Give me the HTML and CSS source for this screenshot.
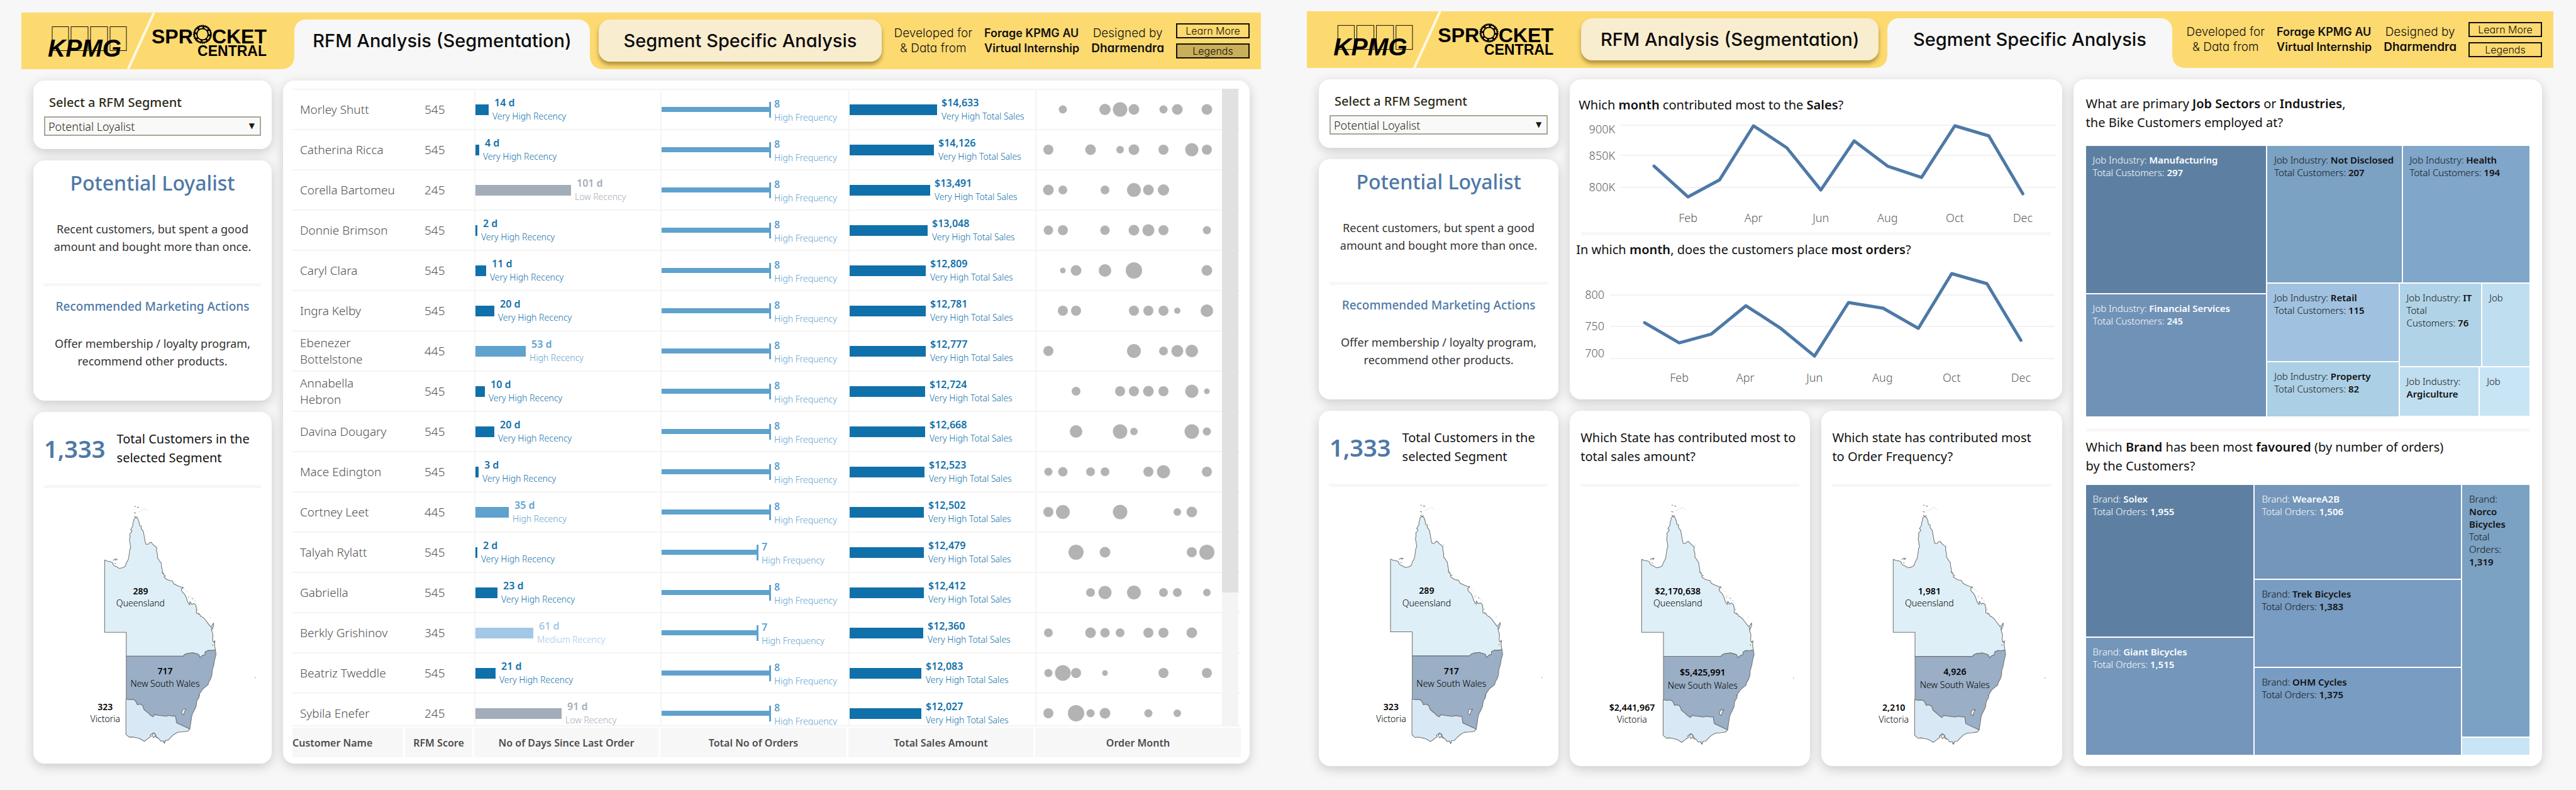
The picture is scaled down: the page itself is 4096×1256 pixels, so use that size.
FILE: index.html
```html
<!DOCTYPE html>
<html lang="en">
<head>
<meta charset="utf-8">
<title>RFM Analysis – Sprocket Central</title>
<link rel="stylesheet" href="styles.css">
</head>
<body>

<svg class="defs" width="0" height="0" aria-hidden="true">
  <defs>
    <symbol id="brand" viewBox="0 0 434 89">
      <g fill="none" stroke="#14100a" stroke-width="1">
        <rect x="49" y="22" width="26" height="38"/>
        <rect x="79" y="22" width="27" height="38"/>
        <rect x="110" y="22" width="27" height="38"/>
        <rect x="141" y="22" width="26" height="38"/>
      </g>
      <text class="logo-kpmg" x="42" y="69">KPMG</text>
      <path d="M211 -1 169 91" stroke="#fff8e2" stroke-width="4"/>
      <text class="logo-sprocket" x="207" y="48">SPR</text>
      <text class="logo-sprocket" x="390" y="48" text-anchor="end">CKET</text>
      <text class="logo-central" x="390" y="68" text-anchor="end">CENTRAL</text>
      <g transform="translate(288 34)">
        <circle r="14" fill="none" stroke="#000" stroke-width="2" stroke-dasharray="2 1"/>
        <circle r="13" fill="none" stroke="#000" stroke-width="2"/>
        <circle r="9" fill="none" stroke="#000" stroke-width="2"/>
        <circle r="11" fill="none" stroke="#000" stroke-width="4" stroke-dasharray="3 5.6"/>
      </g>
    </symbol>
    <symbol id="states" viewBox="0 0 344 392">
      <g transform="translate(71 0) scale(.2617)" stroke="#737373" stroke-width="4" stroke-linejoin="round">
        <path fill="#dfeff7" d="M96 363 112 370 130 373 143 378 148 392 156 399 165 402 185 414 205 410 220 402 228 380 240 358 246 320 248 300 254 290 250 262 246 240 250 222 248 205 256 198 262 186 253 180 262 165 268 155 266 146 270 135 275 112 284 106 296 112 303 128 308 155 318 157 317 172 330 190 335 215 340 245 346 268 360 268 368 258 378 256 384 264 392 272 403 282 412 288 410 305 416 330 416 352 425 362 432 375 438 380 441 405 446 430 444 440 456 450 458 470 475 482 490 488 505 490 515 508 540 520 560 528 572 530 560 540 565 555 580 570 590 590 598 615 605 628 612 635 612 615 625 632 636 626 648 636 652 660 652 685 672 692 676 702 690 710 702 720 715 738 738 768 748 758 756 745 756 762 744 790 752 815 750 850 756 862 764 852 762 880 767 908 745 912 722 911 705 920 703 938 690 940 675 955 665 935 655 932 630 925 595 930 580 936 572 946 227 946 227 801 96 801Z"/>
        <path fill="#9aaec5" d="M227 946H572L580 936 595 930 630 925 655 932 665 935 675 955 690 940 703 938 705 920 722 911 745 912 767 908 771 935 762 970 757 1000 748 1030 746 1060 738 1084 728 1100 722 1120 706 1132 690 1145 680 1160 670 1175 668 1195 655 1215 652 1235 650 1250 640 1272 628 1295 622 1318 620 1335 612 1387 532 1350 525 1308 510 1310 490 1305 466 1310 440 1306 420 1304 400 1300 388 1313 372 1302 360 1290 335 1270 326 1245 308 1236 294 1240 288 1226 278 1212 262 1208 245 1210 227 1205Z"/>
        <path fill="#d8e9f5" d="M225 1205 245 1210 262 1208 278 1212 288 1226 294 1240 308 1236 326 1245 335 1270 360 1290 372 1302 388 1313 400 1300 420 1304 440 1306 466 1310 490 1305 510 1310 525 1308 532 1350 612 1387 600 1400 570 1404 540 1406 515 1420 500 1434 480 1455 464 1456 458 1474 450 1458 435 1460 425 1446 410 1435 404 1418 390 1410 372 1425 378 1432 365 1440 350 1452 336 1462 318 1450 300 1442 280 1438 262 1435 245 1437 225 1420Z"/>
        <path fill="#fff" d="M570 1268 590 1266 580 1280 574 1302 562 1290ZM384 1424 394 1410 404 1426 392 1440Z"/>
        <path fill="none" d="M276 38 284 40M292 44 304 44M274 76 286 80M276 98 284 104 296 102M148 366 156 358 172 358 160 366M156 384 164 386M446 438 454 446M460 458 468 462M566 536 574 528M604 588 606 592M626 594 628 600M658 664 660 668M664 684 668 694M746 768 742 786M746 876 752 880M664 1178 672 1184M400 1430 416 1444M1006 1074 1009 1078M452 1468 464 1464"/>
        <path fill="none" stroke-dasharray="3 9" stroke-width="3" d="M304 72 330 58 345 52 358 68M576 540 600 556M604 578 640 606 648 622M654 648 662 660M732 712 736 712M416 276 420 278"/>
      </g>
    </symbol>
  </defs>
</svg>

<div class="page">

<section class="dashboard dashboard-rfm">
  <header class="banner">
    <svg class="brand" viewBox="0 0 434 89" role="img" aria-label="KPMG and Sprocket Central"><use href="#brand"/></svg>
    <a class="tab tab-current" href="#rfm">RFM Analysis (Segmentation)</a>
    <a class="tab tab-second" href="#segment">Segment Specific Analysis</a>
    <div class="credits">
      <p class="credit">Developed for<br>&amp; Data from</p>
      <p class="credit credit-strong">Forage KPMG AU<br>Virtual Internship</p>
      <p class="credit">Designed by<br><b>Dharmendra</b></p>
      <div class="credit-buttons">
        <button type="button">Learn More</button>
        <button type="button" class="pressed">Legends</button>
      </div>
    </div>
  </header>

  <main class="board board-rfm">
    <div class="sidebar">
      <div class="card filter">
        <label for="segment-a">Select a RFM Segment</label>
        <div class="select-box"><select id="segment-a"><option>Potential Loyalist</option></select></div>
      </div>
      <div class="card profile">
        <h2>Potential Loyalist</h2>
        <p>Recent customers, but spent a good<br>amount and bought more than once.</p>
        <hr>
        <h3>Recommended Marketing Actions</h3>
        <p>Offer membership / loyalty program,<br>recommend other products.</p>
      </div>
      <div class="card region">
        <div class="region-head"><strong>1,333</strong><p>Total Customers in the<br>selected Segment</p></div>
        <hr>
        <svg class="map" viewBox="0 0 344 392">
          <use href="#states"/>
          <text class="map-value" x="153" y="150">289</text><text x="153" y="169">Queensland</text>
          <text class="map-value" x="192" y="276">717</text><text x="192" y="296">New South Wales</text>
          <text class="map-value" x="97" y="333">323</text><text x="97" y="352">Victoria</text>
        </svg>
      </div>
    </div>

    <div class="card customers">
      <table>
        <thead>
          <tr>
            <th scope="col">Customer Name</th><th scope="col">RFM Score</th><th scope="col">No of Days Since Last Order</th>
            <th scope="col">Total No of Orders</th><th scope="col">Total Sales Amount</th><th scope="col">Order Month</th>
          </tr>
        </thead>
        <tbody id="customer-rows"></tbody>
      </table>
      <div class="scrollbar"><div class="thumb"></div></div>
    </div>
  </main>
</section>

<section class="dashboard dashboard-segment">
  <header class="banner">
    <svg class="brand" viewBox="0 0 434 89" role="img" aria-label="KPMG and Sprocket Central"><use href="#brand"/></svg>
    <a class="tab" href="#rfm">RFM Analysis (Segmentation)</a>
    <a class="tab tab-second tab-current" href="#segment">Segment Specific Analysis</a>
    <div class="credits">
      <p class="credit">Developed for<br>&amp; Data from</p>
      <p class="credit credit-strong">Forage KPMG AU<br>Virtual Internship</p>
      <p class="credit">Designed by<br><b>Dharmendra</b></p>
      <div class="credit-buttons">
        <button type="button">Learn More</button>
        <button type="button">Legends</button>
      </div>
    </div>
  </header>

  <main class="board board-segment">
    <div class="sidebar">
      <div class="card filter">
        <label for="segment-b">Select a RFM Segment</label>
        <div class="select-box"><select id="segment-b"><option>Potential Loyalist</option></select></div>
      </div>
      <div class="card profile">
        <h2>Potential Loyalist</h2>
        <p>Recent customers, but spent a good<br>amount and bought more than once.</p>
        <hr>
        <h3>Recommended Marketing Actions</h3>
        <p>Offer membership / loyalty program,<br>recommend other products.</p>
      </div>
      <div class="card region">
        <div class="region-head"><strong>1,333</strong><p>Total Customers in the<br>selected Segment</p></div>
        <hr>
        <svg class="map" viewBox="0 0 344 392">
          <use href="#states"/>
          <text class="map-value" x="153" y="150">289</text><text x="153" y="169">Queensland</text>
          <text class="map-value" x="192" y="276">717</text><text x="192" y="296">New South Wales</text>
          <text class="map-value" x="97" y="333">323</text><text x="97" y="352">Victoria</text>
        </svg>
      </div>
    </div>

    <div class="middle">
      <div class="card trends">
        <h4>Which <b>month</b> contributed most to the <b>Sales</b>?</h4>
        <svg class="chart" viewBox="0 0 782 185">
          <path class="grid" d="M81 15H772M81 63H772M81 114H772"/>
          <polyline points="134,80 188,129 238,102 292,16 345,51 399,118 452,40 505,80 559,98 612,16 666,32 720,124"/>
          <g class="axis-y"><text x="72" y="28">900K</text><text x="72" y="70">850K</text><text x="72" y="120">800K</text></g>
          <g class="axis-x"><text x="188" y="169">Feb</text><text x="292" y="169">Apr</text><text x="399" y="169">Jun</text><text x="505" y="169">Aug</text><text x="612" y="169">Oct</text><text x="720" y="169">Dec</text></g>
        </svg>
        <hr>
        <h4>In which <b>month</b>, does the customers place <b>most orders</b>?</h4>
        <svg class="chart" viewBox="0 0 782 220">
          <path class="grid" d="M65 55H770M65 105H770M65 156H770"/>
          <polyline points="119,99 174,131 225,117 280,72 334,107 389,152 443,67 498,76 554,108 607,21 663,37 717,127"/>
          <g class="axis-y"><text x="55" y="61">800</text><text x="55" y="111">750</text><text x="55" y="154">700</text></g>
          <g class="axis-x"><text x="174" y="193">Feb</text><text x="279" y="193">Apr</text><text x="389" y="193">Jun</text><text x="497" y="193">Aug</text><text x="607" y="193">Oct</text><text x="717" y="193">Dec</text></g>
        </svg>
      </div>
      <div class="card region">
        <div class="region-head"><p>Which State has contributed most to<br>total sales amount?</p></div>
        <hr>
        <svg class="map" viewBox="0 0 344 392">
          <use href="#states"/>
          <text class="map-value" x="153" y="150">$2,170,638</text><text x="153" y="169">Queensland</text>
          <text class="map-value" x="192" y="278">$5,425,991</text><text x="192" y="298">New South Wales</text>
          <text class="map-value" x="81" y="333">$2,441,967</text><text x="81" y="352">Victoria</text>
        </svg>
      </div>
      <div class="card region">
        <div class="region-head"><p>Which state has contributed most<br>to Order Frequency?</p></div>
        <hr>
        <svg class="map" viewBox="0 0 344 392">
          <use href="#states"/>
          <text class="map-value" x="153" y="150">1,981</text><text x="153" y="169">Queensland</text>
          <text class="map-value" x="193" y="277">4,926</text><text x="193" y="297">New South Wales</text>
          <text class="map-value" x="97" y="333">2,210</text><text x="97" y="352">Victoria</text>
        </svg>
      </div>
    </div>

    <div class="card shares">
      <h4>What are primary <b>Job Sectors</b> or <b>Industries</b>,<br>the Bike Customers employed at?</h4>
      <div class="treemap industries">
        <div class="stack stack-large">
          <div class="tile light c1">Job Industry: <b>Manufacturing</b><br>Total Customers: <b>297</b></div>
          <div class="tile light c2">Job Industry: <b>Financial Services</b><br>Total Customers: <b>245</b></div>
        </div>
        <div class="stack stack-rest">
          <div class="pair pair-top">
            <div class="tile c4">Job Industry: <b>Not Disclosed</b><br>Total Customers: <b>207</b></div>
            <div class="tile c5">Job Industry: <b>Health</b><br>Total Customers: <b>194</b></div>
          </div>
          <div class="pair pair-bottom">
            <div class="stack stack-retail">
              <div class="tile c6">Job Industry: <b>Retail</b><br>Total Customers: <b>115</b></div>
              <div class="tile c7">Job Industry: <b>Property</b><br>Total Customers: <b>82</b></div>
            </div>
            <div class="stack stack-small">
              <div class="pair pair-it">
                <div class="tile c8">Job Industry: <b>IT</b><br>Total<br>Customers: <b>76</b></div>
                <div class="tile c9">Job</div>
              </div>
              <div class="pair pair-agri">
                <div class="tile c9">Job Industry:<br><b>Argiculture</b></div>
                <div class="tile c10">Job</div>
              </div>
            </div>
          </div>
        </div>
      </div>
      <hr>
      <h4>Which <b>Brand</b> has been most <b>favoured</b> (by number of orders)<br>by the Customers?</h4>
      <div class="treemap brands">
        <div class="stack stack-solex">
          <div class="tile light c1">Brand: <b>Solex</b><br>Total Orders: <b>1,955</b></div>
          <div class="tile light c3">Brand: <b>Giant Bicycles</b><br>Total Orders: <b>1,515</b></div>
        </div>
        <div class="stack stack-three">
          <div class="tile light c3">Brand: <b>WeareA2B</b><br>Total Orders: <b>1,506</b></div>
          <div class="tile c11">Brand: <b>Trek Bicycles</b><br>Total Orders: <b>1,383</b></div>
          <div class="tile c11">Brand: <b>OHM Cycles</b><br>Total Orders: <b>1,375</b></div>
        </div>
        <div class="stack stack-norco">
          <div class="tile c4">Brand:<br><b>Norco<br>Bicycles</b><br>Total<br>Orders:<br><b>1,319</b></div>
          <div class="tile c10"></div>
        </div>
      </div>
    </div>
  </main>
</section>

</div>
<script src="script.js"></script>
</body>
</html>
```
FILE: styles.css
```css
* { box-sizing: border-box; }

body {
  margin: 0;
  background: #f7f7f7;
  color: #111;
  font-family: "Noto Sans", "Open Sans", sans-serif;
  font-size: 18px;
}

h2, h3, h4, p { margin: 0; font-weight: 400; }
b, strong { font-weight: 600; }

hr {
  width: 100%;
  height: 5px;
  margin: 0;
  border: 0;
  background: #f7f7f7;
}

.defs { position: absolute; }

.page {
  display: grid;
  grid-template-columns: 1971fr 1982fr;
  gap: 73px;
  min-height: 100vh;
  padding: 0 36px 0 34px;
}

.dashboard { display: flex; flex-direction: column; }
.dashboard-rfm { padding: 20px 0 42px; }
.dashboard-segment { padding: 18px 0 38px; }

/* Banner */
.banner {
  display: grid;
  grid-template-columns: 434fr 470fr 14fr 450fr 603fr;
  height: 90px;
  background: #fdda70;
  font-family: Inter, "Open Sans", sans-serif;
  font-feature-settings: "cv11";
}

.brand { width: 100%; height: 90px; }
.logo-kpmg { font: italic bold 39px "Liberation Sans", sans-serif; }
.logo-sprocket { font: bold 32px "Liberation Sans", sans-serif; }
.logo-central { font: bold 23px "Liberation Sans", sans-serif; }

.tab {
  display: flex;
  align-items: center;
  justify-content: center;
  height: 67px;
  margin-top: 11px;
  border-radius: 18px;
  background: #f9edd0;
  box-shadow: 0 5px 6px rgba(110, 85, 10, .55);
  color: #0c0c0c;
  font-size: 29px;
  font-weight: 500;
  text-decoration: none;
  white-space: nowrap;
}
.tab-second { grid-column: 4; }
.tab-current {
  position: relative;
  height: 79px;
  padding-bottom: 12px;
  border-radius: 18px 18px 0 0;
  background: #f7f7f7;
  box-shadow: none;
}
.tab-current::before, .tab-current::after {
  content: "";
  position: absolute;
  bottom: 0;
  width: 18px;
  height: 18px;
}
.tab-current::before { right: 100%; background: radial-gradient(circle at 0 0, transparent 17px, #f7f7f7 18px); }
.tab-current::after { left: 100%; background: radial-gradient(circle at 100% 0, transparent 17px, #f7f7f7 18px); }

.credits {
  display: flex;
  align-items: center;
  justify-content: flex-end;
  gap: 19px;
  padding-right: 18px;
}
.credit {
  font-size: 19px;
  font-weight: 300;
  line-height: 24px;
  text-align: center;
  white-space: nowrap;
}
.credit-strong { font-size: 18px; font-weight: 600; text-align: left; }
.credit-buttons { display: grid; gap: 8px; }
.credit-buttons button {
  width: 117px;
  height: 24px;
  padding: 0;
  border: 2px solid #14100a;
  background: none;
  color: #14100a;
  font: 300 16px Inter, sans-serif;
  font-feature-settings: "cv11";
}
.credit-buttons .pressed { background: #c9af5a; }

/* Boards and cards */
.board {
  display: grid;
  flex: 1;
  gap: 18px;
  padding: 18px 18px 0 19px;
}
.board-rfm { grid-template-columns: 379fr 1537fr; }
.board-segment { grid-template-columns: 381fr 782fr 745fr; }

.sidebar {
  display: grid;
  grid-template-rows: 109px 382px 1fr;
  gap: 18px;
}
.middle {
  display: grid;
  grid-template-columns: 1fr 1fr;
  grid-template-rows: 509px 1fr;
  gap: 18px;
}

.card {
  border-radius: 18px;
  background: #fff;
  box-shadow: 0 5px 18px rgba(0, 0, 0, .18);
}

.filter { padding: 22px 17px 0; }
.filter label {
  display: block;
  padding-left: 8px;
  color: #2c2815;
  font-size: 20px;
  font-weight: 500;
  line-height: 26px;
}
.select-box { position: relative; margin-top: 9px; }
.select-box select {
  width: 100%;
  height: 31px;
  padding: 0 5px;
  appearance: none;
  border: 2px solid #a9a697;
  border-radius: 0;
  background: #f9f9f9;
  color: #2c2815;
  font: 300 18px "Noto Sans", sans-serif;
}
.select-box::after {
  content: "▼";
  position: absolute;
  top: 7px;
  right: 10px;
  color: #1c1a10;
  font: 12px/17px "DejaVu Sans", sans-serif;
}

.profile { padding: 14px 17px 0; text-align: center; }
.profile h2 { color: #4e79a7; font-size: 32px; font-weight: 500; line-height: 44px; }
.profile p { color: #333; font-size: 18px; line-height: 28px; white-space: nowrap; }
.profile h2 + p { margin: 37px 0 44px; }
.profile h3 { margin: 18px 0 31px; color: #4e79a7; font-size: 19px; font-weight: 500; line-height: 28px; white-space: nowrap; }

.region { padding: 0 17px; }
.region-head {
  display: flex;
  align-items: center;
  gap: 18px;
  height: 116px;
}
.region-head strong { color: #4e79a7; font-size: 38px; font-weight: 600; }
.region-head p { color: #111; font-size: 20px; line-height: 30px; white-space: nowrap; }
.map { display: block; width: 100%; margin-top: 19px; }
.map text { font-size: 14px; font-weight: 300; text-anchor: middle; }
.map .map-value { font-weight: 600; }

/* Customer table */
.customers { position: relative; padding: 13px 14px 10px 15px; }
table { display: flex; flex-direction: column-reverse; height: 100%; }
tr {
  display: grid;
  grid-template-columns: 179fr 110fr 296fr 299fr 297fr 327fr;
}
tbody {
  display: block;
  flex: 1 1 0;
  min-height: 0;
  overflow: hidden;
  border-top: 2px solid #f4f4f4;
  border-bottom: 2px solid #f4f4f4;
}
thead { display: block; padding-top: 2px; }
th {
  height: 47px;
  padding: 0;
  border-right: 3px solid #fff;
  background: #f7f7f7;
  color: #4d4d4d;
  font-size: 16px;
  font-weight: 600;
  line-height: 48px;
  white-space: nowrap;
}
th:first-child { text-align: left; }
th:last-child { border-right: 0; }
td {
  display: flex;
  align-items: center;
  height: 64px;
  padding: 0;
  border-bottom: 2px solid #f4f4f4;
  white-space: nowrap;
}
td:nth-child(n+3) { border-left: 2px solid #f4f4f4; }
.name, .score { color: #505050; font-size: 19px; font-weight: 300; line-height: 26px; }
.name { padding-left: 12px; }
.score { padding-left: 31px; }

.bar { height: 17px; background: currentColor; }
.stem { height: 8px; background: currentColor; }
.tick { width: 3px; height: 25px; background: currentColor; }
.mark { padding-left: 7px; font-size: 14px; font-weight: 300; line-height: 21px; }
.mark b { display: block; font-size: 16px; }
.orders .mark { padding: 3px 0 0 5px; }
.days .mark { padding-left: 6px; }
.days .mark b { padding-left: 3px; }
.very-high { color: #1070aa; }
.high { color: #5fa2ce; }
.medium { color: #a3c8e7; }
.low { color: #a3acb9; }
.months svg { width: 296px; height: 62px; fill: #b3b3b3; }

.scrollbar {
  position: absolute;
  top: 13px;
  right: 18px;
  bottom: 59px;
  width: 26px;
  background: #f4f4f4;
}
.thumb { height: 79%; background: #e1e1e1; }

/* Trend charts */
.trends { grid-column: 1 / -1; padding: 26px 0 0; }
.trends h4, .shares h4 { font-size: 20px; line-height: 30px; white-space: nowrap; }
.trends h4 { padding: 0 0 2px 14px; }
.trends hr { width: auto; margin: 0 18px; }
.trends hr + h4 { padding: 8px 0 2px 10px; }
.chart { display: block; width: 100%; }
.chart text { fill: #5c5c5c; font-size: 18px; font-weight: 300; }
.chart polyline { fill: none; stroke: #4e79a7; stroke-width: 5; stroke-linejoin: round; stroke-linecap: round; }
.grid { stroke: #f2f2f2; stroke-width: 2; }
.axis-y { text-anchor: end; }
.axis-x { text-anchor: middle; }

/* Treemaps */
.shares { display: flex; flex-direction: column; padding: 24px 20px 18px; }
.shares hr { margin: 19px 0 10px; }
.treemap, .pair, .stack { display: grid; gap: 2px; }
.treemap { flex: 1; }
.industries { grid-template-columns: 286fr 416fr; margin-top: 22px; }
.brands { grid-template-columns: 267fr 328fr 107fr; margin-top: 15px; }
.stack-large { grid-template-rows: 234fr 193fr; }
.stack-rest { grid-template-rows: 217fr 210fr; }
.pair-top { grid-template-columns: 213fr 201fr; }
.pair-bottom { grid-template-columns: 208fr 206fr; }
.stack-retail { grid-template-rows: 123fr 86fr; }
.stack-small { grid-template-rows: 131fr 77fr; }
.pair-it { grid-template-columns: 130fr 75fr; }
.pair-agri { grid-template-columns: 126fr 79fr; }
.stack-solex { grid-template-rows: 242fr 187fr; }
.stack-three { grid-template-rows: 150fr 138fr 138fr; }
.stack-norco { grid-template-rows: 402fr 27fr; }

.tile {
  min-width: 0;
  min-height: 0;
  padding: 12px 0 0 11px;
  overflow: hidden;
  font-size: 15px;
  font-weight: 300;
  line-height: 20px;
  white-space: nowrap;
}
.stack-norco .tile:last-child { padding: 0; }
.light { color: #fff; }
.c1 { background: #5d80a2; }
.c2 { background: #7092b7; }
.c3 { background: #7396ba; }
.c4 { background: #7ba1c3; }
.c5 { background: #80a6ca; }
.c6 { background: #a0c1e0; }
.c7 { background: #abcfe5; }
.c8 { background: #b0d3e7; }
.c9 { background: #bfdef0; }
.c10 { background: #c8e5f6; }
.c11 { background: #789cc2; }
```
FILE: script.js
```js
// name, score, days since last order, orders, sales, order months as [month, radius]
const customers = [
  ["Morley Shutt", 545, 14, 8, 14633, [[2, 6.5], [5, 9], [6, 11.5], [7, 8.5], [9, 6.5], [10, 8.5], [12, 8.5]]],
  ["Catherina Ricca", 545, 4, 8, 14126, [[1, 8], [4, 8.5], [6, 6], [7, 8.5], [9, 8], [11, 10.5], [12, 8]]],
  ["Corella Bartomeu", 245, 101, 8, 13491, [[1, 8.5], [2, 7], [5, 7], [7, 11], [8, 8.5], [9, 9]]],
  ["Donnie Brimson", 545, 2, 8, 13048, [[1, 7.5], [2, 8], [5, 7.5], [7, 8.5], [8, 9.5], [9, 8], [12, 6.5]]],
  ["Caryl Clara", 545, 11, 8, 12809, [[2, 4.5], [3, 8.5], [5, 10], [7, 13], [12, 8.5]]],
  ["Ingra Kelby", 545, 20, 8, 12781, [[2, 8], [3, 8], [7, 8], [8, 8], [9, 8], [10, 5], [12, 10]]],
  ["Ebenezer<br>Bottelstone", 445, 53, 8, 12777, [[1, 8], [7, 11], [9, 7], [10, 9.5], [11, 10]]],
  ["Annabella<br>Hebron", 545, 10, 8, 12724, [[3, 7], [6, 8], [7, 8], [8, 8.5], [9, 8], [11, 10.5], [12, 4.5]]],
  ["Davina Dougary", 545, 20, 8, 12668, [[3, 10], [6, 11.5], [7, 6], [11, 11.5], [12, 6.5]]],
  ["Mace Edington", 545, 3, 8, 12523, [[1, 6.5], [2, 7.5], [4, 7], [5, 7], [8, 8], [9, 10.5], [12, 8]]],
  ["Cortney Leet", 445, 35, 8, 12502, [[1, 8], [2, 11], [6, 11.5], [10, 6], [11, 8.5]]],
  ["Talyah Rylatt", 545, 2, 7, 12479, [[3, 12], [5, 8.5], [11, 8], [12, 12]]],
  ["Gabriella", 545, 23, 8, 12412, [[4, 7], [5, 10.5], [7, 11], [9, 7], [10, 7], [12, 6]]],
  ["Berkly Grishinov", 345, 61, 7, 12360, [[1, 7], [4, 8.5], [5, 7.5], [6, 7], [8, 8], [9, 8], [11, 8.5]]],
  ["Beatriz Tweddle", 545, 21, 8, 12083, [[1, 6.5], [2, 12.5], [3, 8], [5, 4.5], [9, 8], [12, 8]]],
  ["Sybila Enefer", 245, 91, 8, 12027, [[1, 8], [3, 13], [4, 6.5], [5, 8.5], [8, 6.5], [10, 6]]]
];

const monthX = [0, 19, 42, 63, 86, 109, 133, 155, 178, 202, 224, 247, 271];
const recency = { 5: ["very-high", "Very High"], 4: ["high", "High"], 3: ["medium", "Medium"], 2: ["low", "Low"] };

document.getElementById("customer-rows").innerHTML = customers.map(([name, score, days, orders, sales, months]) => {
  const [tone, level] = recency[Math.floor(score / 100)];
  const dots = months.map(([m, r]) => `<circle cx="${monthX[m]}" cy="31" r="${r}"/>`).join("");
  return `<tr>
    <td class="name"><span>${name}</span></td>
    <td class="score">${score}</td>
    <td class="days ${tone}"><div class="bar" style="width:${Math.round(days * 1.5)}px"></div><div class="mark"><b>${days} d</b>${level} Recency</div></td>
    <td class="orders high"><div class="stem" style="width:${orders === 8 ? 171 : 151}px"></div><div class="tick"></div><div class="mark"><b>${orders}</b>High Frequency</div></td>
    <td class="very-high"><div class="bar" style="width:${Math.round(sales * 0.00947)}px"></div><div class="mark"><b>$${sales.toLocaleString("en-US")}</b>Very High Total Sales</div></td>
    <td class="months"><svg>${dots}</svg></td>
  </tr>`;
}).join("");
```
